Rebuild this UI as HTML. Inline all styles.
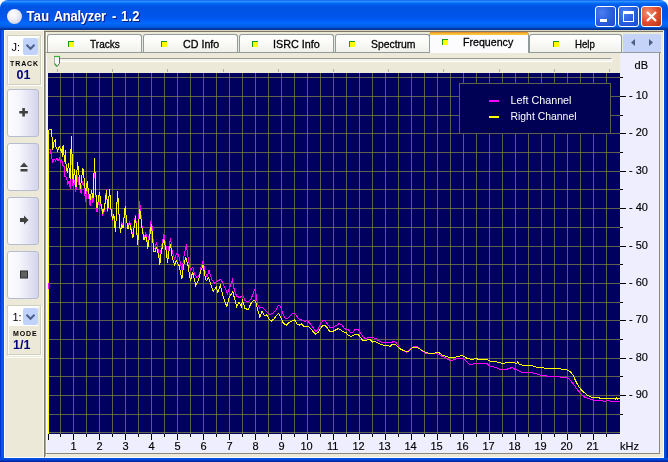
<!DOCTYPE html>
<html><head><meta charset="utf-8"><title>Tau Analyzer - 1.2</title>
<style>
html,body{margin:0;padding:0;}
body{width:668px;height:462px;overflow:hidden;background:#ece9d8;position:relative;font-family:"Liberation Sans",sans-serif;font-size:11px;color:#000;}
div,span,i{position:absolute;box-sizing:border-box;}
#frame{left:0;top:0;width:668px;height:462px;background:#0650e0;}
#fl{left:0;top:29px;width:4px;height:433px;background:linear-gradient(to right,#0027c4 0,#0a4be6 30%,#0a5af0 60%,#0650e0 100%);}
#fr{left:664px;top:29px;width:4px;height:433px;background:linear-gradient(to right,#0650e0 0,#0448d8 40%,#0030b4 75%,#001e96 100%);}
#fb{left:0;top:458px;width:668px;height:4px;background:linear-gradient(to bottom,#0650e0 0,#0448d8 40%,#0030b4 75%,#001e96 100%);}
#title{left:0;top:0;width:668px;height:30px;border-radius:8px 8px 0 0;
 background:linear-gradient(to bottom,#0058ee 0%,#3593ff 4%,#288eff 6%,#127dff 8%,#036ffc 10%,#0262ee 14%,#0057e5 20%,#0054e3 24%,#0055eb 56%,#005bf5 66%,#026afe 76%,#0062ef 86%,#0052d6 92%,#0040ab 94%,#003092 100%);}
#corners{left:0;top:0;width:668px;height:8px;background:#fff;}
#ttext{left:26.5px;top:9.3px;width:120px;height:16px;transform:scaleY(1.08);transform-origin:0 50%;color:#fff;font-weight:bold;font-size:13px;letter-spacing:0.3px;text-shadow:1px 1px 0 #0a1883;white-space:nowrap;line-height:15px;}
#orb{left:6.5px;top:8.5px;width:15px;height:15px;border-radius:50%;background:radial-gradient(circle at 40% 35%,#ffffff 0%,#f0f0f8 35%,#d8d8e8 70%,#b8b8d0 100%);}
.wb{top:6px;width:21px;height:21px;border:1px solid #fff;border-radius:3px;background:radial-gradient(circle at 30% 30%,#4b7ff0 0%,#2a5fe0 50%,#1c48c8 100%);}
#client{left:4px;top:30px;width:660px;height:428px;background:#ece9d8;}
.tab{top:34px;height:19px;border:1px solid #919b9c;border-bottom:none;border-radius:3px 3px 0 0;background:linear-gradient(to bottom,#ffffff 0%,#fbfbf9 40%,#f0efe8 100%);}
.tab span{white-space:nowrap;line-height:13px;transform-origin:0 0;-webkit-text-stroke:0.3px #000;}
.ico{width:6px;height:6px;background:#ffff00;border-top:1px solid #1c9a1c;border-left:1px solid #1c9a1c;}
svg{position:absolute;left:0;top:0;}
svg text{font-family:"Liberation Sans",sans-serif;font-size:11px;}
.ax text{stroke:#000;stroke-width:0.15px;}
.btn{left:7px;width:32px;height:48px;border:1px solid #b8bcd0;border-radius:3px;background:linear-gradient(to right,#fdfdff 0%,#f4f4fc 40%,#d4d4ec 100%);}
.grp{left:7px;width:34px;border:1px solid #d0d0bf;box-shadow:1px 1px 0 #fff, inset 1px 1px 0 #fff;}
.combo{left:0px;top:0px;width:30px;height:20px;background:#fff;}
.combo b{position:absolute;left:15px;top:2px;width:15px;height:17px;background:#c1d2fb;border-radius:2px;}
.lbl{font-weight:bold;font-size:7px;letter-spacing:0.9px;white-space:nowrap;transform-origin:0 0;line-height:8px;}
.num{font-weight:bold;font-size:12.5px;color:#000080;white-space:nowrap;line-height:14px;transform-origin:0 0;}
</style></head><body>
<div id="root" style="left:0;top:0;width:668px;height:462px;will-change:transform;overflow:hidden">
<div id="frame"></div><div id="fl"></div><div id="fr"></div><div id="fb"></div>
<div id="corners"></div>
<div id="title"></div>
<div id="orb"></div>
<div id="ttext"><span style="left:0;letter-spacing:0.3px">Tau</span> <span style="left:27.2px;letter-spacing:-0.25px">Analyzer</span> <span style="left:85.5px">-</span> <span style="left:94.4px;letter-spacing:0.2px">1.2</span></div>
<div class="wb" style="left:595px;width:20.5px"><i style="left:4px;top:12px;width:7px;height:3px;background:#fff"></i></div>
<div class="wb" style="left:618px"><i style="left:4px;top:4px;width:11px;height:11px;border:1px solid #fff;border-top-width:3px"></i></div>
<div class="wb" style="left:641px;background:radial-gradient(circle at 30% 30%,#f09070 0%,#e05030 50%,#c03010 100%)"><svg width="19" height="19" viewBox="0 0 19 19"><path d="M5 5 L14 14 M14 5 L5 14" stroke="#fff" stroke-width="2.2" fill="none"/></svg></div>
<div id="client"></div>

<!-- left toolbar -->
<div style="left:4px;top:30px;width:40px;height:427px;background:#ece9d8;border-left:1px solid #fff;border-top:1px solid #fff;border-right:1px solid #f8f7f1"></div>
<div style="left:5px;top:357px;width:38px;height:1px;background:#fbfaf5"></div>
<div style="left:4px;top:457px;width:660px;height:1px;background:#fff"></div>
<!-- right sunken panel -->
<div style="left:44px;top:30px;width:620px;height:428px;background:#ece9d8;border-left:1px solid #7d7a68;border-right:1px solid #fff;border-bottom:1px solid #fff;"></div>
<div style="left:44px;top:30px;width:620px;height:1px;background:#d4d0c0"></div>
<div style="left:44px;top:31px;width:619px;height:1px;background:#7d7a68"></div>
<div style="left:45px;top:32px;width:1px;height:424px;background:#aca899"></div>
<div style="left:46px;top:32px;width:1px;height:424px;background:#fbfaf6"></div>
<div class="grp" style="top:35px;height:50px">
  <div class="combo"><span style="left:3.5px;top:5px;line-height:13px">J:</span><b></b>
  <svg width="30" height="18"><path d="M18.5 8.800 L22.5 12.800 L26.5 8.800" stroke="#4d6185" stroke-width="2" fill="none"/></svg></div>
  <span class="lbl" style="left:2px;top:24px">TRACK</span>
  <span class="num" style="left:8.5px;top:32px">01</span>
</div>
<div class="btn" style="top:89px"><svg width="30" height="46"><path d="M11.3 21h3v-3h2.600v3h3v2.600h-3v3h-2.600v-3h-3z" fill="#404040"/></svg></div>
<div class="btn" style="top:143px"><svg width="30" height="46"><path d="M12 23 L16 18.5 L20 23z M12.5 25h7v2.5h-7z" fill="#404040"/></svg></div>
<div class="btn" style="top:197px"><svg width="30" height="46"><path d="M12 20h4v-2.5l4.5 4.5l-4.5 4.5v-2.5h-4z" fill="#404040"/></svg></div>
<div class="btn" style="top:251px"><svg width="30" height="46"><rect x="12.5" y="19" width="7" height="7" fill="#606060" stroke="#303030"/></svg></div>
<div class="grp" style="top:305px;height:50px">
  <div class="combo"><span style="left:4.5px;top:5px;line-height:13px">1:</span><b></b>
  <svg width="30" height="18"><path d="M18.5 8.800 L22.5 12.800 L26.5 8.800" stroke="#4d6185" stroke-width="2" fill="none"/></svg></div>
  <span class="lbl" style="left:5px;top:24px">MODE</span>
  <span class="num" style="left:5px;top:32px">1/1</span>
</div>

<!-- tab strip -->
<div class="tab" style="left:47px;width:95px"><i class="ico" style="left:20px;top:6px"></i><span style="left:42.4px;top:3px;transform:scaleX(0.917)">Tracks</span></div>
<div class="tab" style="left:143px;width:95px"><i class="ico" style="left:17px;top:6px"></i><span style="left:38.7px;top:3px;transform:scaleX(0.973)">CD Info</span></div>
<div class="tab" style="left:239px;width:95px"><i class="ico" style="left:12px;top:6px"></i><span style="left:33.4px;top:3px;transform:scaleX(0.979)">ISRC Info</span></div>
<div class="tab" style="left:335px;width:95px"><i class="ico" style="left:13px;top:6px"></i><span style="left:34.6px;top:3px;transform:scaleX(0.945)">Spectrum</span></div>
<div class="tab" style="left:529px;width:93px"><i class="ico" style="left:23px;top:6px"></i><span style="left:44.7px;top:3px;transform:scaleX(0.875)">Help</span></div>

<div style="left:46px;top:52px;width:615px;height:1px;background:#919b9c"></div>
<div class="tab" style="left:429px;width:100px;top:32px;height:22px;background:#fcfcfe;border-color:#919b9c;border-top:3px solid #ffc73c;"><i style="left:0;top:-3px;width:98px;height:1px;background:#e8962e"></i><i style="left:-1px;top:-2px;width:100px;height:1px;background:#f7b83a"></i><i class="ico" style="left:12px;top:4px"></i><span style="left:33.4px;top:1px;transform:scaleX(0.967)">Frequency</span></div>
<div style="left:623px;top:34px;width:38px;height:18px;background:#c4d3f7;border-radius:2px"></div>
<svg width="668" height="462" style="pointer-events:none">
 <path d="M635 39 L631 42.5 L635 46z M649 39 L653 42.5 L649 46z" fill="#4d6185"/>
</svg>

<!-- plot -->
<div style="left:47px;top:53px;width:612px;height:400px;background:#eeeeff"></div>
<div style="left:46px;top:453px;width:614px;height:1px;background:#8a8878"></div>
<div style="left:659px;top:53px;width:1px;height:401px;background:#8a8878"></div>
<div style="left:47px;top:53px;width:573px;height:20px;background:#ece9d8"></div>
<!-- slider -->
<div style="left:57px;top:58px;width:555px;height:4px;border-top:1px solid #9d9c99;border-left:1px solid #9d9c99;border-bottom:1px solid #fff;border-right:1px solid #fff;background:#f2f1ea;border-radius:1px"></div>
<svg width="668" height="462">
 <g stroke="#b4b1a2" stroke-width="1">
 <line x1="57.5" y1="69" x2="57.5" y2="72"/><line x1="112.5" y1="69" x2="112.5" y2="72"/><line x1="167.5" y1="69" x2="167.5" y2="72"/><line x1="223.5" y1="69" x2="223.5" y2="72"/><line x1="278.5" y1="69" x2="278.5" y2="72"/><line x1="333.5" y1="69" x2="333.5" y2="72"/><line x1="388.5" y1="69" x2="388.5" y2="72"/><line x1="443.5" y1="69" x2="443.5" y2="72"/><line x1="499.5" y1="69" x2="499.5" y2="72"/><line x1="554.5" y1="69" x2="554.5" y2="72"/><line x1="609.5" y1="69" x2="609.5" y2="72"/>
 </g>
 <path d="M54.5 56.5 h5 v7 l-2.5 3 l-2.5 -3z" fill="#f8f8fb" stroke="none"/>
 <path d="M54.5 57 v6.5" stroke="#9fb3a6" stroke-width="1" fill="none"/>
 <path d="M59.5 57 v6.5 l-2.5 3" stroke="#5b645b" stroke-width="1" fill="none"/>
 <path d="M54.5 63.5 l2.5 3" stroke="#2ca02c" stroke-width="1.200" fill="none"/>
 <path d="M54 56.5 h6" stroke="#2fb52f" stroke-width="1.200"/>
 <rect x="48" y="73" width="572" height="361" fill="#00005e"/>
 <g stroke="#5e5f4c" stroke-width="1" shape-rendering="crispEdges">
 <line x1="60.5" y1="73" x2="60.5" y2="434"/>
<line x1="73.5" y1="73" x2="73.5" y2="434"/>
<line x1="86.5" y1="73" x2="86.5" y2="434"/>
<line x1="99.5" y1="73" x2="99.5" y2="434"/>
<line x1="112.5" y1="73" x2="112.5" y2="434"/>
<line x1="125.5" y1="73" x2="125.5" y2="434"/>
<line x1="138.5" y1="73" x2="138.5" y2="434"/>
<line x1="151.5" y1="73" x2="151.5" y2="434"/>
<line x1="164.5" y1="73" x2="164.5" y2="434"/>
<line x1="177.5" y1="73" x2="177.5" y2="434"/>
<line x1="190.5" y1="73" x2="190.5" y2="434"/>
<line x1="203.5" y1="73" x2="203.5" y2="434"/>
<line x1="216.5" y1="73" x2="216.5" y2="434"/>
<line x1="229.5" y1="73" x2="229.5" y2="434"/>
<line x1="242.5" y1="73" x2="242.5" y2="434"/>
<line x1="255.5" y1="73" x2="255.5" y2="434"/>
<line x1="268.5" y1="73" x2="268.5" y2="434"/>
<line x1="281.5" y1="73" x2="281.5" y2="434"/>
<line x1="294.5" y1="73" x2="294.5" y2="434"/>
<line x1="307.5" y1="73" x2="307.5" y2="434"/>
<line x1="320.5" y1="73" x2="320.5" y2="434"/>
<line x1="333.5" y1="73" x2="333.5" y2="434"/>
<line x1="346.5" y1="73" x2="346.5" y2="434"/>
<line x1="359.5" y1="73" x2="359.5" y2="434"/>
<line x1="372.5" y1="73" x2="372.5" y2="434"/>
<line x1="385.5" y1="73" x2="385.5" y2="434"/>
<line x1="398.5" y1="73" x2="398.5" y2="434"/>
<line x1="411.5" y1="73" x2="411.5" y2="434"/>
<line x1="424.5" y1="73" x2="424.5" y2="434"/>
<line x1="437.5" y1="73" x2="437.5" y2="434"/>
<line x1="450.5" y1="73" x2="450.5" y2="434"/>
<line x1="463.5" y1="73" x2="463.5" y2="434"/>
<line x1="476.5" y1="73" x2="476.5" y2="434"/>
<line x1="489.5" y1="73" x2="489.5" y2="434"/>
<line x1="502.5" y1="73" x2="502.5" y2="434"/>
<line x1="515.5" y1="73" x2="515.5" y2="434"/>
<line x1="528.5" y1="73" x2="528.5" y2="434"/>
<line x1="541.5" y1="73" x2="541.5" y2="434"/>
<line x1="554.5" y1="73" x2="554.5" y2="434"/>
<line x1="567.5" y1="73" x2="567.5" y2="434"/>
<line x1="580.5" y1="73" x2="580.5" y2="434"/>
<line x1="593.5" y1="73" x2="593.5" y2="434"/>
<line x1="606.5" y1="73" x2="606.5" y2="434"/>
<line x1="48" y1="77.5" x2="620" y2="77.5"/>
<line x1="48" y1="96.5" x2="620" y2="96.5"/>
<line x1="48" y1="115.5" x2="620" y2="115.5"/>
<line x1="48" y1="133.5" x2="620" y2="133.5"/>
<line x1="48" y1="152.5" x2="620" y2="152.5"/>
<line x1="48" y1="171.5" x2="620" y2="171.5"/>
<line x1="48" y1="189.5" x2="620" y2="189.5"/>
<line x1="48" y1="208.5" x2="620" y2="208.5"/>
<line x1="48" y1="227.5" x2="620" y2="227.5"/>
<line x1="48" y1="246.5" x2="620" y2="246.5"/>
<line x1="48" y1="264.5" x2="620" y2="264.5"/>
<line x1="48" y1="283.5" x2="620" y2="283.5"/>
<line x1="48" y1="302.5" x2="620" y2="302.5"/>
<line x1="48" y1="320.5" x2="620" y2="320.5"/>
<line x1="48" y1="339.5" x2="620" y2="339.5"/>
<line x1="48" y1="358.5" x2="620" y2="358.5"/>
<line x1="48" y1="376.5" x2="620" y2="376.5"/>
<line x1="48" y1="395.5" x2="620" y2="395.5"/>
<line x1="48" y1="414.5" x2="620" y2="414.5"/>
<line x1="48" y1="432.5" x2="620" y2="432.5"/>
</g><g stroke="#7e7e30" stroke-width="1" stroke-dasharray="1 12" shape-rendering="crispEdges">
<line x1="60" y1="77.5" x2="620" y2="77.5"/>
<line x1="60" y1="96.5" x2="620" y2="96.5"/>
<line x1="60" y1="115.5" x2="620" y2="115.5"/>
<line x1="60" y1="133.5" x2="620" y2="133.5"/>
<line x1="60" y1="152.5" x2="620" y2="152.5"/>
<line x1="60" y1="171.5" x2="620" y2="171.5"/>
<line x1="60" y1="189.5" x2="620" y2="189.5"/>
<line x1="60" y1="208.5" x2="620" y2="208.5"/>
<line x1="60" y1="227.5" x2="620" y2="227.5"/>
<line x1="60" y1="246.5" x2="620" y2="246.5"/>
<line x1="60" y1="264.5" x2="620" y2="264.5"/>
<line x1="60" y1="283.5" x2="620" y2="283.5"/>
<line x1="60" y1="302.5" x2="620" y2="302.5"/>
<line x1="60" y1="320.5" x2="620" y2="320.5"/>
<line x1="60" y1="339.5" x2="620" y2="339.5"/>
<line x1="60" y1="358.5" x2="620" y2="358.5"/>
<line x1="60" y1="376.5" x2="620" y2="376.5"/>
<line x1="60" y1="395.5" x2="620" y2="395.5"/>
<line x1="60" y1="414.5" x2="620" y2="414.5"/>
<line x1="60" y1="432.5" x2="620" y2="432.5"/>
 </g>
 <polyline points="48.5,434.0 48.5,150.0 50.2,149.7 51.5,155.8 52.7,163.0 53.5,160.0 54.5,159.4 55.7,161.0 56.9,158.2 58.1,160.6 59.3,158.2 60.5,161.8 61.7,159.4 63.0,165.5 64.2,166.7 64.8,176.4 66.6,177.6 67.8,184.8 69.0,181.0 70.2,188.5 71.4,150.0 72.2,170.0 73.2,190.0 74.5,180.0 75.7,192.0 77.8,175.2 79.0,185.0 81.2,194.0 82.4,181.2 84.0,186.0 85.7,202.0 87.2,186.0 88.5,196.0 90.2,206.0 91.5,196.0 93.0,203.0 94.5,166.0 95.5,190.0 97.0,212.0 98.3,203.0 99.5,194.0 101.0,206.0 102.8,215.0 104.5,210.0 106.3,189.3 107.8,212.0 109.6,190.0 110.8,208.0 112.5,221.0 113.8,216.0 115.4,232.0 116.5,213.0 117.6,193.0 118.6,209.0 120.3,233.0 121.8,222.0 123.0,226.0 125.2,206.0 126.5,220.0 128.1,228.0 129.5,221.0 131.6,230.0 133.0,236.0 134.2,224.0 135.5,215.0 136.6,228.0 137.8,243.0 139.6,200.8 140.8,212.0 141.5,223.0 142.7,230.0 144.0,238.0 145.7,233.0 146.6,236.0 147.8,247.0 149.3,234.0 151.5,217.8 152.7,236.0 153.9,248.0 155.0,249.0 156.3,243.0 157.5,246.0 158.7,252.0 159.9,262.0 161.1,249.0 162.4,242.0 163.9,234.2 165.2,242.0 166.4,248.0 167.6,260.0 169.0,246.0 170.6,238.5 171.8,249.0 173.3,255.0 174.5,259.0 176.3,254.0 177.8,253.6 179.3,258.0 182.0,270.3 184.0,256.0 186.3,244.5 188.1,258.0 190.4,270.3 192.7,267.3 195.0,274.8 197.2,277.9 199.5,274.8 201.0,267.3 203.0,261.2 204.8,270.3 207.0,277.1 209.0,270.3 211.6,279.4 214.6,283.2 217.7,280.9 220.7,279.4 223.0,283.2 225.2,288.5 227.5,293.8 229.8,287.0 232.4,280.2 234.3,290.0 236.6,296.0 239.6,297.6 242.7,295.3 245.0,300.6 248.0,302.1 251.0,299.1 253.3,293.0 254.8,289.2 256.0,293.6 257.5,304.2 259.8,308.0 262.0,307.3 264.3,309.5 267.4,312.6 269.6,314.5 272.7,313.3 275.7,310.3 278.0,306.1 279.5,305.5 281.0,308.0 283.3,314.8 285.5,318.6 287.8,318.6 290.1,315.6 292.4,313.6 294.6,313.3 296.9,316.4 299.2,319.4 301.5,319.7 304.5,321.2 307.5,320.9 310.5,323.9 313.6,328.5 315.8,331.5 318.1,329.2 320.4,323.9 322.7,320.9 325.0,320.6 327.2,323.9 330.2,327.7 333.3,327.7 336.3,325.2 339.3,323.6 341.6,324.7 343.9,327.7 346.0,329.4 348.3,329.7 350.5,332.4 352.8,332.0 355.0,329.7 358.0,329.4 360.4,332.7 362.7,336.5 365.0,338.5 368.0,337.6 371.0,337.3 374.0,338.0 376.3,338.5 378.6,341.0 381.6,342.1 384.6,342.1 387.7,342.6 390.7,343.0 393.7,341.4 396.0,342.6 398.3,345.6 400.5,349.1 403.6,350.6 406.6,352.1 408.9,350.6 411.2,348.2 413.4,346.7 415.7,346.1 418.0,347.1 420.2,349.1 422.5,350.9 425.5,353.2 428.6,353.9 431.6,353.9 434.6,353.2 436.0,353.5 439.0,354.2 442.0,356.5 445.0,357.3 448.0,359.5 451.2,360.6 454.0,359.5 457.2,358.8 460.2,358.8 463.3,358.0 465.5,360.3 467.8,363.0 470.0,364.5 473.0,364.1 475.4,363.0 480.0,363.0 484.5,363.0 486.8,363.0 488.3,364.8 490.5,366.4 493.6,366.8 496.6,367.9 499.6,369.4 502.7,369.7 506.5,369.4 509.5,368.2 512.5,367.6 514.8,369.1 517.8,370.2 520.0,371.7 522.4,372.4 526.0,372.3 532.0,372.6 535.0,373.5 541.0,375.3 547.2,376.1 556.3,376.1 560.8,377.1 567.0,378.0 570.0,379.8 572.2,382.6 574.5,385.6 577.5,389.7 580.5,393.5 583.6,396.5 586.6,398.0 591.0,399.2 594.0,400.3 601.8,400.6 604.8,401.4 607.8,400.6 610.8,401.1 617.0,401.4 619.5,401.4" fill="none" stroke="#ff00ff" stroke-width="1" shape-rendering="crispEdges"/>
 <polyline points="48.5,434.0 48.5,131.0 49.6,129.3 51.3,129.5 51.8,133.0 52.2,141.0 52.7,150.0 53.2,146.0 53.7,143.0 54.5,141.0 55.1,140.2 55.5,145.6 56.9,148.8 57.6,151.8 58.7,147.5 59.6,146.5 60.5,149.3 61.5,152.0 62.4,146.5 62.8,156.5 63.5,145.0 64.2,158.0 64.9,161.7 65.4,150.0 66.0,164.2 67.4,173.3 68.5,163.0 70.1,179.2 71.4,136.0 72.2,160.0 73.2,183.0 74.5,169.0 76.0,187.0 77.5,161.8 78.7,171.5 80.4,189.0 81.5,178.0 83.0,168.5 84.3,181.0 85.7,193.8 87.2,181.0 88.5,192.0 90.2,199.6 91.5,190.0 93.0,198.0 94.6,157.8 95.5,188.0 97.0,208.4 98.3,200.0 99.5,191.8 101.0,204.0 102.8,213.0 104.5,208.0 106.5,190.5 107.8,211.0 109.6,189.0 110.8,207.0 112.5,220.0 113.8,214.0 115.4,231.7 116.5,212.0 117.6,190.9 118.6,208.0 120.3,232.7 121.8,224.0 123.0,228.0 125.2,206.4 126.5,220.0 128.1,229.0 129.5,223.0 131.6,232.0 133.0,237.5 134.2,226.0 135.5,216.5 136.6,230.0 137.8,245.0 139.5,208.7 140.6,214.0 141.5,225.0 142.7,232.0 144.0,240.0 145.7,236.0 146.6,238.0 147.8,249.0 149.3,238.0 151.5,224.5 152.7,240.3 153.9,251.2 155.0,252.0 156.3,247.6 157.5,250.0 158.7,256.0 159.9,264.5 161.1,253.6 162.4,246.4 163.9,239.1 165.2,246.4 166.4,252.4 167.6,262.8 169.0,251.2 170.6,243.9 171.8,254.8 173.3,260.9 174.5,264.5 176.3,261.0 177.8,263.3 179.3,266.0 181.8,279.4 183.6,265.8 185.8,257.4 188.1,265.8 190.4,280.9 192.7,271.8 195.7,285.5 198.7,279.4 201.0,270.3 203.0,265.0 204.8,274.8 206.3,280.9 208.6,277.9 210.8,283.9 213.1,291.5 216.2,287.0 217.7,292.3 220.4,285.5 223.0,296.0 226.8,306.7 229.0,297.6 232.8,291.5 234.3,297.6 236.6,306.7 238.9,302.1 241.2,306.7 242.7,300.6 244.9,308.2 248.0,309.7 251.0,303.6 254.0,299.8 256.0,302.7 257.5,308.8 259.8,317.1 262.0,311.0 264.3,315.6 266.6,314.8 268.9,318.6 271.2,321.2 274.2,318.6 276.5,315.6 278.7,313.6 281.0,317.9 283.3,323.2 286.3,325.2 289.3,322.4 292.4,320.6 294.6,319.7 296.9,323.9 299.2,325.2 301.5,323.9 303.7,326.2 306.8,326.2 309.0,327.0 311.3,329.2 313.6,332.3 315.8,334.2 318.1,332.3 320.4,328.5 322.7,325.5 324.9,325.2 327.2,327.7 329.5,331.2 332.5,331.5 335.5,330.0 338.6,328.5 340.8,330.0 343.1,331.5 346.0,332.7 348.3,335.0 350.5,336.5 352.8,335.8 355.0,334.5 358.0,334.2 360.4,337.3 362.7,340.3 365.0,341.0 368.0,339.5 370.2,339.5 372.5,342.1 375.5,341.5 378.6,343.6 381.6,344.8 384.6,345.2 387.7,345.6 390.0,346.4 392.2,344.5 395.2,344.1 397.5,346.4 399.8,348.6 402.8,350.2 405.8,351.2 408.1,351.7 410.4,349.4 413.4,347.1 416.5,347.1 419.5,348.6 422.5,350.9 425.5,352.4 428.6,353.2 431.6,353.6 434.6,353.2 437.7,352.4 439.0,352.7 442.0,355.0 445.0,356.0 448.0,357.0 451.2,357.6 454.0,357.6 457.2,356.5 460.2,356.0 462.5,355.5 464.8,357.0 467.8,358.8 470.8,359.1 473.9,359.1 475.7,358.0 477.7,359.1 481.5,359.1 486.0,359.1 488.3,360.3 490.5,361.4 493.6,361.4 496.6,361.8 499.6,362.6 502.7,363.3 505.0,363.3 505.7,362.3 508.0,362.6 510.2,362.1 513.3,362.3 515.5,363.3 517.0,363.0 517.8,361.5 519.0,364.1 522.4,365.2 525.4,365.3 528.4,365.5 532.0,365.5 533.6,366.5 538.0,367.4 544.0,368.0 550.0,368.5 556.3,368.5 562.4,369.2 565.7,369.2 568.4,370.5 570.7,372.0 573.0,375.3 575.2,379.8 577.5,384.4 580.5,388.9 583.6,392.0 586.6,394.7 589.6,396.5 592.7,397.4 597.2,397.7 601.8,398.3 607.8,398.5 613.9,398.5 615.4,399.2 616.6,398.0 617.7,399.1 618.7,398.0 619.5,398.0" fill="none" stroke="#ffff00" stroke-width="1" shape-rendering="crispEdges"/>
 <rect x="48" y="283" width="1" height="6" fill="#ff00ff"/>
 <rect x="459.5" y="83.5" width="151" height="50" fill="#000054" stroke="#5e5f4c"/>
 <line x1="489" y1="101" x2="499" y2="101" stroke="#ff00ff" stroke-width="2"/>
 <line x1="489" y1="117" x2="499" y2="117" stroke="#ffff00" stroke-width="2"/>
 <text x="510.5" y="103.5" fill="#fff" textLength="61" lengthAdjust="spacingAndGlyphs">Left Channel</text>
 <text x="510.5" y="119.5" fill="#fff" textLength="66" lengthAdjust="spacingAndGlyphs">Right Channel</text>
 <g stroke="#000" stroke-width="1" shape-rendering="crispEdges">
 <line x1="48.5" y1="434" x2="48.5" y2="440"/>
<line x1="60.5" y1="434" x2="60.5" y2="437"/>
<line x1="73.5" y1="434" x2="73.5" y2="440"/>
<line x1="86.5" y1="434" x2="86.5" y2="437"/>
<line x1="99.5" y1="434" x2="99.5" y2="440"/>
<line x1="112.5" y1="434" x2="112.5" y2="437"/>
<line x1="125.5" y1="434" x2="125.5" y2="440"/>
<line x1="138.5" y1="434" x2="138.5" y2="437"/>
<line x1="151.5" y1="434" x2="151.5" y2="440"/>
<line x1="164.5" y1="434" x2="164.5" y2="437"/>
<line x1="177.5" y1="434" x2="177.5" y2="440"/>
<line x1="190.5" y1="434" x2="190.5" y2="437"/>
<line x1="203.5" y1="434" x2="203.5" y2="440"/>
<line x1="216.5" y1="434" x2="216.5" y2="437"/>
<line x1="229.5" y1="434" x2="229.5" y2="440"/>
<line x1="242.5" y1="434" x2="242.5" y2="437"/>
<line x1="255.5" y1="434" x2="255.5" y2="440"/>
<line x1="268.5" y1="434" x2="268.5" y2="437"/>
<line x1="281.5" y1="434" x2="281.5" y2="440"/>
<line x1="294.5" y1="434" x2="294.5" y2="437"/>
<line x1="307.5" y1="434" x2="307.5" y2="440"/>
<line x1="320.5" y1="434" x2="320.5" y2="437"/>
<line x1="333.5" y1="434" x2="333.5" y2="440"/>
<line x1="346.5" y1="434" x2="346.5" y2="437"/>
<line x1="359.5" y1="434" x2="359.5" y2="440"/>
<line x1="372.5" y1="434" x2="372.5" y2="437"/>
<line x1="385.5" y1="434" x2="385.5" y2="440"/>
<line x1="398.5" y1="434" x2="398.5" y2="437"/>
<line x1="411.5" y1="434" x2="411.5" y2="440"/>
<line x1="424.5" y1="434" x2="424.5" y2="437"/>
<line x1="437.5" y1="434" x2="437.5" y2="440"/>
<line x1="450.5" y1="434" x2="450.5" y2="437"/>
<line x1="463.5" y1="434" x2="463.5" y2="440"/>
<line x1="476.5" y1="434" x2="476.5" y2="437"/>
<line x1="489.5" y1="434" x2="489.5" y2="440"/>
<line x1="502.5" y1="434" x2="502.5" y2="437"/>
<line x1="515.5" y1="434" x2="515.5" y2="440"/>
<line x1="528.5" y1="434" x2="528.5" y2="437"/>
<line x1="541.5" y1="434" x2="541.5" y2="440"/>
<line x1="554.5" y1="434" x2="554.5" y2="437"/>
<line x1="567.5" y1="434" x2="567.5" y2="440"/>
<line x1="580.5" y1="434" x2="580.5" y2="437"/>
<line x1="593.5" y1="434" x2="593.5" y2="440"/>
<line x1="606.5" y1="434" x2="606.5" y2="437"/>
<line x1="620" y1="77.5" x2="623" y2="77.5"/>
<line x1="620" y1="96.5" x2="626" y2="96.5"/>
<line x1="620" y1="115.5" x2="623" y2="115.5"/>
<line x1="620" y1="133.5" x2="626" y2="133.5"/>
<line x1="620" y1="152.5" x2="623" y2="152.5"/>
<line x1="620" y1="171.5" x2="626" y2="171.5"/>
<line x1="620" y1="189.5" x2="623" y2="189.5"/>
<line x1="620" y1="208.5" x2="626" y2="208.5"/>
<line x1="620" y1="227.5" x2="623" y2="227.5"/>
<line x1="620" y1="246.5" x2="626" y2="246.5"/>
<line x1="620" y1="264.5" x2="623" y2="264.5"/>
<line x1="620" y1="283.5" x2="626" y2="283.5"/>
<line x1="620" y1="302.5" x2="623" y2="302.5"/>
<line x1="620" y1="320.5" x2="626" y2="320.5"/>
<line x1="620" y1="339.5" x2="623" y2="339.5"/>
<line x1="620" y1="358.5" x2="626" y2="358.5"/>
<line x1="620" y1="376.5" x2="623" y2="376.5"/>
<line x1="620" y1="395.5" x2="626" y2="395.5"/>
<line x1="620" y1="414.5" x2="623" y2="414.5"/>
 </g>
 <g fill="#000" class="ax">
 <text x="73.5" y="450" text-anchor="middle">1</text>
<text x="99.5" y="450" text-anchor="middle">2</text>
<text x="125.5" y="450" text-anchor="middle">3</text>
<text x="151.5" y="450" text-anchor="middle">4</text>
<text x="177.5" y="450" text-anchor="middle">5</text>
<text x="203.5" y="450" text-anchor="middle">6</text>
<text x="229.5" y="450" text-anchor="middle">7</text>
<text x="255.5" y="450" text-anchor="middle">8</text>
<text x="281.5" y="450" text-anchor="middle">9</text>
<text x="306.6" y="450" text-anchor="middle">10</text>
<text x="332.6" y="450" text-anchor="middle">11</text>
<text x="358.6" y="450" text-anchor="middle">12</text>
<text x="384.6" y="450" text-anchor="middle">13</text>
<text x="410.6" y="450" text-anchor="middle">14</text>
<text x="436.6" y="450" text-anchor="middle">15</text>
<text x="462.6" y="450" text-anchor="middle">16</text>
<text x="488.6" y="450" text-anchor="middle">17</text>
<text x="514.6" y="450" text-anchor="middle">18</text>
<text x="540.6" y="450" text-anchor="middle">19</text>
<text x="566.6" y="450" text-anchor="middle">20</text>
<text x="592.6" y="450" text-anchor="middle">21</text>
<text x="620" y="450">kHz</text>
 <text x="648" y="99" text-anchor="end">- 10</text>
<text x="648" y="136" text-anchor="end">- 20</text>
<text x="648" y="174" text-anchor="end">- 30</text>
<text x="648" y="211" text-anchor="end">- 40</text>
<text x="648" y="249" text-anchor="end">- 50</text>
<text x="648" y="286" text-anchor="end">- 60</text>
<text x="648" y="323" text-anchor="end">- 70</text>
<text x="648" y="361" text-anchor="end">- 80</text>
<text x="648" y="398" text-anchor="end">- 90</text>
<text x="648" y="69" text-anchor="end">dB</text>
 </g>
</svg>
</div>
</body></html>
